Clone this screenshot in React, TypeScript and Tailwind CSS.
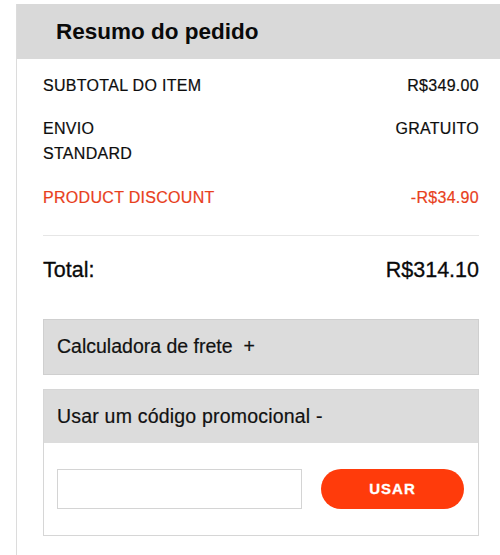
import React from "react";

export default function App() {
  const font = { fontFamily: '"Liberation Sans", Arial, Helvetica, sans-serif' };
  return (
    <div className="w-[500px] h-[555px] bg-white overflow-hidden pt-[4px] pl-[16px]" style={font}>
      <div className="border-l border-[#dcdcdc] h-[600px]">
        <div className="h-[55px] bg-[#d9d9d9] flex items-center pl-[39px]">
          <h1 className="text-[22.5px] font-bold text-[#0a0a0a]">Resumo do pedido</h1>
        </div>
        <div className="pl-[26px] pr-[21px] text-[#0d0d0d]">
          <div className="pt-[17px] flex justify-between text-[16px] leading-[20px] tracking-[0.3px] [-webkit-text-stroke:0.2px]">
            <span>SUBTOTAL DO ITEM</span>
            <span>R$349.00</span>
          </div>
          <div className="mt-[23px] flex justify-between text-[16px] leading-[20px] tracking-[0.3px] [-webkit-text-stroke:0.2px]">
            <div className="flex flex-col gap-[5px]">
              <span>ENVIO</span>
              <span>STANDARD</span>
            </div>
            <span>GRATUITO</span>
          </div>
          <div className="mt-[24px] flex justify-between text-[16px] leading-[20px] tracking-[0.3px] text-[#e8401c] [-webkit-text-stroke:0.2px]">
            <span>PRODUCT DISCOUNT</span>
            <span>-R$34.90</span>
          </div>
          <div className="mt-[27px] h-px bg-[#e6e6e6]" />
          <div className="mt-[22px] flex justify-between text-[21.5px] leading-[24px] text-[#0a0a0a] [-webkit-text-stroke:0.3px]">
            <span>Total:</span>
            <span>R$314.10</span>
          </div>
          <div className="mt-[37px] h-[56px] bg-[#dcdcdc] border border-[#cfcfcf] flex items-center pl-[13px] text-[19.5px] text-[#111] [-webkit-text-stroke:0.2px]">
            <span>Calculadora de frete&nbsp;&nbsp;+</span>
          </div>
          <div className="mt-[14px] border border-[#d6d6d6]">
            <div className="h-[53px] bg-[#dcdcdc] flex items-center pl-[13px] text-[19.5px] tracking-[0.2px] text-[#111] [-webkit-text-stroke:0.2px]">
              <span>Usar um código promocional -</span>
            </div>
            <div className="h-[92px] bg-white flex items-center pl-[13px] pr-[14px] justify-between">
              <input className="w-[245px] h-[40px] border border-[#d4d4d4] outline-none" />
              <button className="w-[143px] h-[40px] rounded-full bg-[#ff3b0b] text-white font-bold text-[15px] tracking-[1px] [-webkit-text-stroke:0.3px]">
                USAR
              </button>
            </div>
          </div>
        </div>
      </div>
    </div>
  );
}
